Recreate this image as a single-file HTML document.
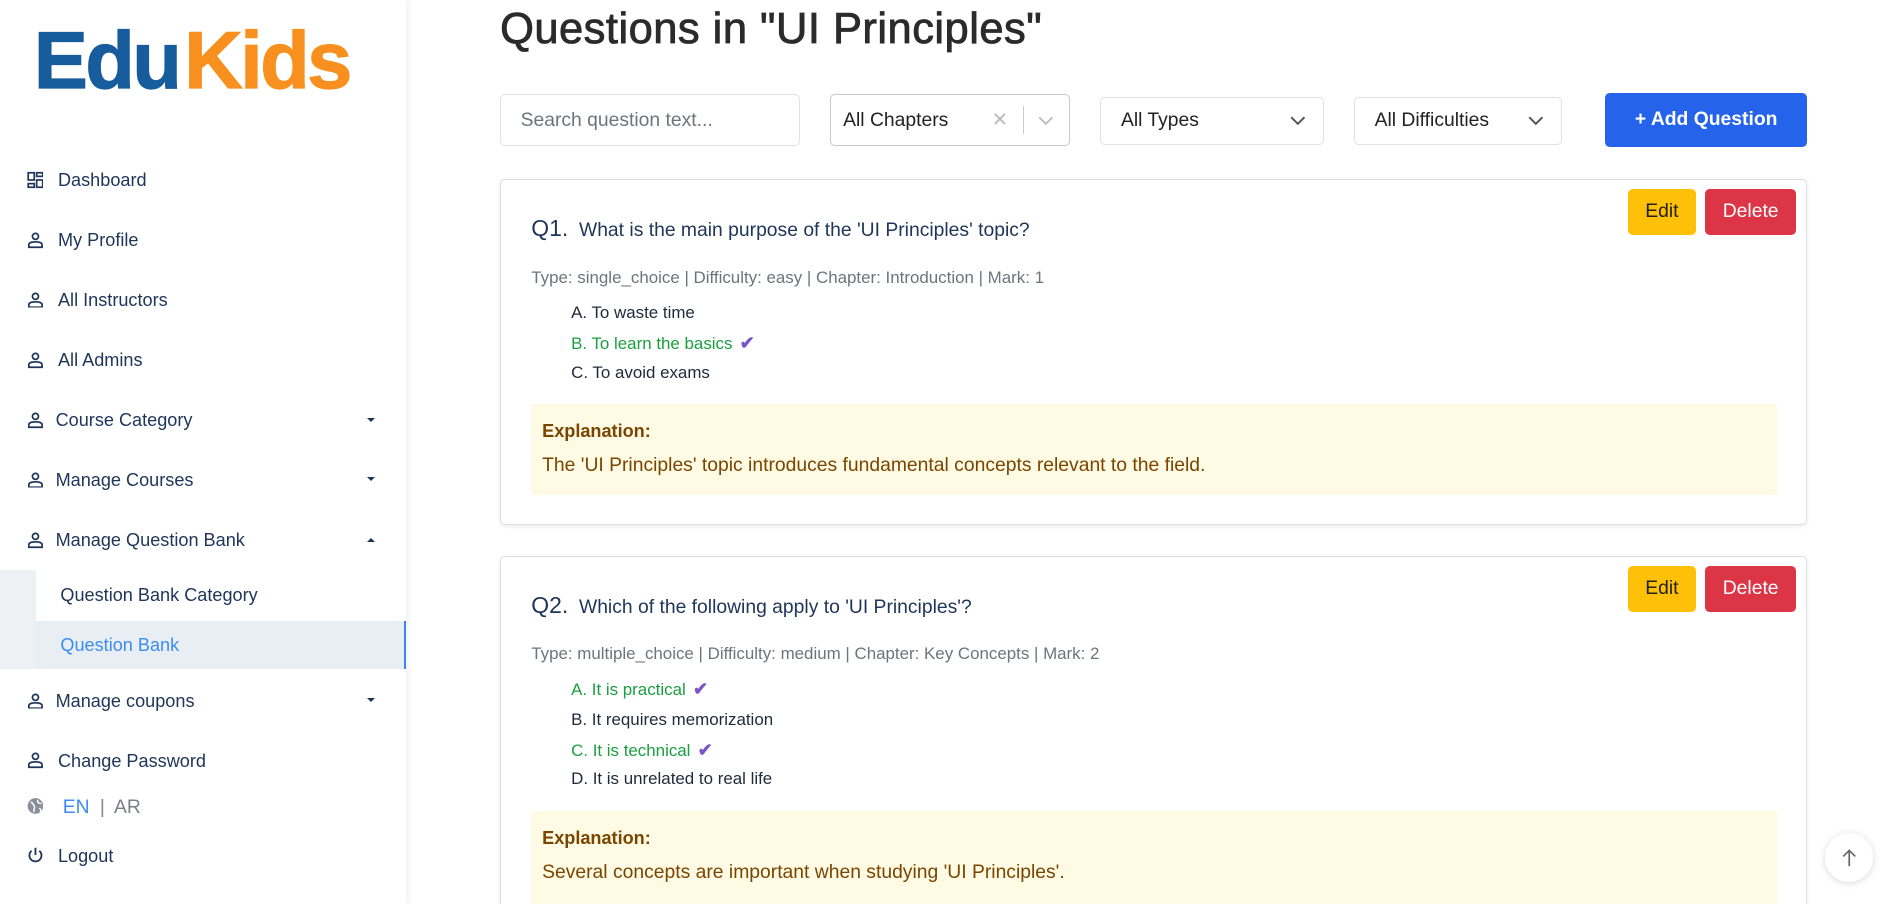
<!DOCTYPE html>
<html><head><meta charset="utf-8"><style>
html,body{margin:0;padding:0;background:#fff;overflow:hidden;width:1894px;height:904px}
#w{position:relative;width:1568px;height:748px;zoom:1.20791;font-family:"Liberation Sans",sans-serif;color:#1d3557}
.a{position:absolute;white-space:nowrap}
.c{position:absolute;white-space:nowrap;line-height:20px;transform:translateY(-10px)}
.side{position:absolute;left:0;top:0;width:336px;height:748px;background:#fff;box-shadow:2px 0 4px rgba(0,0,0,.06)}
.mi{font-size:15px;color:#1e3559}
.ico{position:absolute;left:22px;width:14px;height:14px;transform:translateY(-7px)}
.car{position:absolute;left:304px;width:0;height:0;border-left:4px solid transparent;border-right:4px solid transparent}
.box{position:absolute;border:1px solid #dee2e6;border-radius:4px;background:#fff;box-sizing:border-box}
.sel{font-size:16px;color:#222}
.card{position:absolute;left:414px;width:1082px;border:1px solid #dcdfe3;border-radius:4px;box-shadow:0 1px 4px rgba(0,0,0,.08);box-sizing:border-box}
.btn{position:absolute;border-radius:4px;font-size:16px;text-align:center;line-height:38px;height:38px}
.q{font-size:16px;color:#1e3559}
.meta{font-size:14px;color:#6c757d}
.opt{font-size:14px;color:#1e2a3a}
.ok{color:#1a9e3f}
.exp{position:absolute;left:25px;width:1031px;background:#fefae3;border-radius:2px}
.chk{display:inline-block;color:#7b55c7;font-size:15px;margin-left:6px;font-weight:bold}
</style></head><body><div id="w">
<div class="side"></div>
<div class="a" style="left:28px;top:15px;font-size:67px;font-weight:bold;letter-spacing:-2px;line-height:72px;-webkit-text-stroke:1px currentColor"><span style="color:#175c9c">Edu</span><span style="color:#f7901e;margin-left:4px">Kids</span></div>

<svg class="ico" style="top:149px" viewBox="0 0 14 14" fill="none" stroke="#1e3559" stroke-width="1.4"><rect x="1" y="1" width="5" height="6"/><rect x="8" y="1" width="5" height="3"/><rect x="1" y="10" width="5" height="3"/><rect x="8" y="7" width="5" height="6"/></svg>
<div class="c mi" style="left:48px;top:149px">Dashboard</div>

<svg class="ico" style="top:199px" viewBox="0 0 14 14" fill="none" stroke="#1e3559" stroke-width="1.4"><circle cx="7" cy="4" r="2.5"/><path d="M1.5 13v-2c0-1.5 2-2.5 5.5-2.5s5.5 1 5.5 2.5v2z"/></svg>
<div class="c mi" style="left:48px;top:199px">My Profile</div>
<svg class="ico" style="top:248px" viewBox="0 0 14 14" fill="none" stroke="#1e3559" stroke-width="1.4"><circle cx="7" cy="4" r="2.5"/><path d="M1.5 13v-2c0-1.5 2-2.5 5.5-2.5s5.5 1 5.5 2.5v2z"/></svg>
<div class="c mi" style="left:48px;top:248px">All Instructors</div>
<svg class="ico" style="top:298px" viewBox="0 0 14 14" fill="none" stroke="#1e3559" stroke-width="1.4"><circle cx="7" cy="4" r="2.5"/><path d="M1.5 13v-2c0-1.5 2-2.5 5.5-2.5s5.5 1 5.5 2.5v2z"/></svg>
<div class="c mi" style="left:48px;top:298px">All Admins</div>
<svg class="ico" style="top:348px" viewBox="0 0 14 14" fill="none" stroke="#1e3559" stroke-width="1.4"><circle cx="7" cy="4" r="2.5"/><path d="M1.5 13v-2c0-1.5 2-2.5 5.5-2.5s5.5 1 5.5 2.5v2z"/></svg>
<div class="c mi" style="left:46px;top:348px">Course Category</div>
<div class="car" style="top:346px;border-top:4px solid #1e3559"></div>
<svg class="ico" style="top:397px" viewBox="0 0 14 14" fill="none" stroke="#1e3559" stroke-width="1.4"><circle cx="7" cy="4" r="2.5"/><path d="M1.5 13v-2c0-1.5 2-2.5 5.5-2.5s5.5 1 5.5 2.5v2z"/></svg>
<div class="c mi" style="left:46px;top:397px">Manage Courses</div>
<div class="car" style="top:395px;border-top:4px solid #1e3559"></div>
<svg class="ico" style="top:447px" viewBox="0 0 14 14" fill="none" stroke="#1e3559" stroke-width="1.4"><circle cx="7" cy="4" r="2.5"/><path d="M1.5 13v-2c0-1.5 2-2.5 5.5-2.5s5.5 1 5.5 2.5v2z"/></svg>
<div class="c mi" style="left:46px;top:447px">Manage Question Bank</div>
<div class="car" style="top:445px;border-bottom:4px solid #1e3559"></div>

<div class="a" style="left:0;top:472px;width:30px;height:82px;background:#eef1f4"></div>
<div class="a" style="left:30px;top:514px;width:306px;height:40px;background:#e9eef4;border-right:2px solid #3b82f6;box-sizing:border-box"></div>
<div class="c mi" style="left:50px;top:493px">Question Bank Category</div>
<div class="c mi" style="left:50px;top:534px;color:#3b8df0">Question Bank</div>

<svg class="ico" style="top:580px" viewBox="0 0 14 14" fill="none" stroke="#1e3559" stroke-width="1.4"><circle cx="7" cy="4" r="2.5"/><path d="M1.5 13v-2c0-1.5 2-2.5 5.5-2.5s5.5 1 5.5 2.5v2z"/></svg>
<div class="c mi" style="left:46px;top:580px">Manage coupons</div>
<div class="car" style="top:578px;border-top:4px solid #1e3559"></div>
<svg class="ico" style="top:629px" viewBox="0 0 14 14" fill="none" stroke="#1e3559" stroke-width="1.4"><circle cx="7" cy="4" r="2.5"/><path d="M1.5 13v-2c0-1.5 2-2.5 5.5-2.5s5.5 1 5.5 2.5v2z"/></svg>
<div class="c mi" style="left:48px;top:630px">Change Password</div>
<svg class="ico" style="top:667px" viewBox="0 0 14 14"><circle cx="7" cy="7" r="6.5" fill="#8a9099"/><path d="M3 4c2 0 2 2 3 3s-1 3 0 5M9 2c-1 2 1 3 3 3M10 9c1 0 2 1 1 3" stroke="#fff" stroke-width="1.2" fill="none"/></svg>
<div class="c" style="left:52px;top:669px;font-size:16px;color:#3b8df0">EN <span style="color:#888;margin:0 4px">|</span> <span style="color:#7a7f88">AR</span></div>
<svg class="ico" style="top:708px" viewBox="0 0 14 14" fill="none" stroke="#1e3559" stroke-width="1.5"><path d="M7 1v6"/><path d="M3.8 3.5a5 5 0 1 0 6.4 0"/></svg>
<div class="c mi" style="left:48px;top:709px">Logout</div>

<div class="a" style="left:414px;top:2px;font-size:36px;color:#2b2b2b;line-height:46px;letter-spacing:0.4px;-webkit-text-stroke:0.7px #2b2b2b">Questions in "UI Principles"</div>

<div class="box" style="left:414px;top:78px;width:248px;height:43px"></div>
<div class="c" style="left:431px;top:100px;font-size:16px;color:#6c757d">Search question text...</div>
<div class="box" style="left:687px;top:78px;width:199px;height:43px;border-color:#c5c9ce"></div>
<div class="c sel" style="left:698px;top:100px">All Chapters</div>
<div class="c" style="left:821px;top:100px;font-size:16px;color:#bbb">✕</div>
<div class="a" style="left:847px;top:88px;width:1px;height:23px;background:#ccc"></div>
<svg class="a" style="left:859px;top:96px" width="13" height="8" viewBox="0 0 13 8"><path d="M1 1l5.5 5.5L12 1" stroke="#bbb" stroke-width="1.5" fill="none"/></svg>
<div class="box" style="left:911px;top:80px;width:185px;height:40px"></div>
<div class="c sel" style="left:928px;top:100px">All Types</div>
<svg class="a" style="left:1068px;top:96px" width="13" height="8" viewBox="0 0 13 8"><path d="M1 1l5.5 5.5L12 1" stroke="#555" stroke-width="1.6" fill="none"/></svg>
<div class="box" style="left:1121px;top:80px;width:172px;height:40px"></div>
<div class="c sel" style="left:1138px;top:100px">All Difficulties</div>
<svg class="a" style="left:1265px;top:96px" width="13" height="8" viewBox="0 0 13 8"><path d="M1 1l5.5 5.5L12 1" stroke="#555" stroke-width="1.6" fill="none"/></svg>
<div class="a" style="left:1329px;top:77px;width:167px;height:45px;background:#2563eb;border-radius:4px;color:#fff;font-weight:bold;font-size:16px;text-align:center;line-height:45px">+ Add Question</div>

<!-- card 1 -->
<div class="card" style="top:148px;height:287px">
 <div class="btn" style="left:933px;top:8px;width:56px;background:#ffc107;color:#222">Edit</div>
 <div class="btn" style="left:997px;top:8px;width:75px;background:#dc3545;color:#fff">Delete</div>
 <div class="c q" style="left:25px;top:40px"><span style="font-size:19px">Q1.</span>&nbsp; What is the main purpose of the 'UI Principles' topic?</div>
 <div class="c meta" style="left:25px;top:81px">Type: single_choice | Difficulty: easy | Chapter: Introduction | Mark: 1</div>
 <div class="c opt" style="left:58px;top:110px">A. To waste time</div>
 <div class="c opt ok" style="left:58px;top:135px">B. To learn the basics<span class="chk">✔</span></div>
 <div class="c opt" style="left:58px;top:160px">C. To avoid exams</div>
 <div class="exp" style="top:186px;height:75px">
  <div class="c" style="left:9px;top:22px;font-size:15px;font-weight:bold;color:#7a4500">Explanation:</div>
  <div class="c" style="left:9px;top:51px;font-size:16px;color:#7a4500">The 'UI Principles' topic introduces fundamental concepts relevant to the field.</div>
 </div>
</div>

<!-- card 2 -->
<div class="card" style="top:460px;height:300px">
 <div class="btn" style="left:933px;top:8px;width:56px;background:#ffc107;color:#222">Edit</div>
 <div class="btn" style="left:997px;top:8px;width:75px;background:#dc3545;color:#fff">Delete</div>
 <div class="c q" style="left:25px;top:40px"><span style="font-size:19px">Q2.</span>&nbsp; Which of the following apply to 'UI Principles'?</div>
 <div class="c meta" style="left:25px;top:81px">Type: multiple_choice | Difficulty: medium | Chapter: Key Concepts | Mark: 2</div>
 <div class="c opt ok" style="left:58px;top:110px">A. It is practical<span class="chk">✔</span></div>
 <div class="c opt" style="left:58px;top:135px">B. It requires memorization</div>
 <div class="c opt ok" style="left:58px;top:160px">C. It is technical<span class="chk">✔</span></div>
 <div class="c opt" style="left:58px;top:184px">D. It is unrelated to real life</div>
 <div class="exp" style="top:211px;height:90px">
  <div class="c" style="left:9px;top:22px;font-size:15px;font-weight:bold;color:#7a4500">Explanation:</div>
  <div class="c" style="left:9px;top:51px;font-size:16px;color:#7a4500">Several concepts are important when studying 'UI Principles'.</div>
 </div>
</div>

<div class="a" style="left:1511px;top:690px;width:40px;height:40px;border-radius:50%;background:#fff;box-shadow:0 1px 6px rgba(0,0,0,.15)"></div>
<svg class="a" style="left:1525px;top:702px" width="12" height="16" viewBox="0 0 12 16"><path d="M6 15V2M1 7l5-5 5 5" stroke="#666" stroke-width="1.4" fill="none"/></svg>
</div></body></html>
